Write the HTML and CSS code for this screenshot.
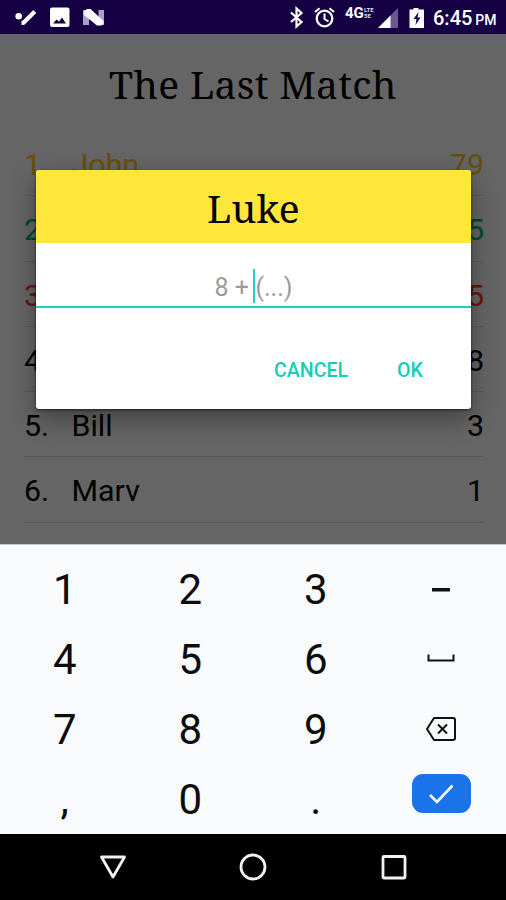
FILE: index.html
```
<!DOCTYPE html>
<html lang="en">
<head>
  <meta charset="UTF-8" />
  <meta name="viewport" content="width=device-width, initial-scale=1.0"/>
  <title>The Last Match</title>
  <link rel="stylesheet" href="styles.css">
</head>
<body>

  <div class="status-bar">
    <svg class="notifications" width="110" height="34" viewBox="0 0 110 34">
      <circle cx="18.700" cy="16.200" r="3.300" fill="#fff"/>
      <path d="M21.500 22.800h2L34.800 11.500" fill="none" stroke="#fff" stroke-width="4.200" stroke-linejoin="round"/>
      <rect x="50" y="7.500" width="19.500" height="19.500" rx="2" fill="#fff"/>
      <path d="M53 23.500l3.500-4 2.500 2 3-4 4 6z" fill="#160044"/>
      <path d="M83 10h6v15h-6zM98.500 10h5.500v15h-5.500z" fill="#a9a0c4"/>
      <path d="M83.500 12l3.500-3h3.500L103.500 21v3l-2.500 1.500h-4L84 15z" fill="#fff"/>
    </svg>
    <svg class="signals" width="144" height="34" viewBox="286 0 144 34">
      <path d="M291 12.500l10.500 9.500-5 4.500V8.500l5 4.500L291 22" fill="none" stroke="#fff" stroke-width="2.200"/>
      <circle cx="324.500" cy="18.500" r="7.800" fill="none" stroke="#fff" stroke-width="2.300"/>
      <path d="M324.500 13.500v5.500l4 2.500M315 12l4.500-3.800M334 12l-4.500-3.800" fill="none" stroke="#fff" stroke-width="2"/>
      <text x="345" y="18" class="net">4G</text>
      <text x="364" y="11.500" class="lte">LTE</text>
      <text x="364" y="18" class="lte">5E</text>
      <path d="M378 28l20-20v20z" fill="#6b5a92"/>
      <path d="M378 28l12.500-12.500V28z" fill="#fff"/>
      <path d="M409.500 9.500h4V8h5v1.500h5.500V28h-14.500z" fill="#fff"/>
      <path d="M418.500 12l-5 7h3l-1 6 5-7.500h-3z" fill="#160044"/>
    </svg>
    <div class="clock">6:45 <small>PM</small></div>
  </div>

  <div class="screen">
    <h1>The Last Match</h1>
    <ul class="scores">
      <li class="gold"><span class="rank">1.</span><span class="name">John</span><span>79</span></li>
      <li class="green"><span class="rank">2.</span><span class="name">Luke</span><span>15</span></li>
      <li class="red"><span class="rank">3.</span><span class="name">Anna</span><span>15</span></li>
      <li><span class="rank">4.</span><span class="name">Luke</span><span>8</span></li>
      <li><span class="rank">5.</span><span class="name">Bill</span><span>3</span></li>
      <li><span class="rank">6.</span><span class="name">Marv</span><span>1</span></li>
    </ul>

    <div class="overlay">
      <div class="dialog">
        <h2>Luke</h2>
        <div class="field"><span>8 +</span><i class="caret"></i><span>(...)</span></div>
        <div class="actions">
          <button>CANCEL</button>
          <button>OK</button>
        </div>
      </div>
    </div>
  </div>

  <div class="keyboard">
    <div>1</div><div>2</div><div>3</div>
    <div><svg width="20" height="4"><rect x="1" y="0" width="18" height="3.500" fill="#111"/></svg></div>
    <div>4</div><div>5</div><div>6</div>
    <div class="space"><svg width="28" height="8"><path d="M1.500 0.500V6.500H26.500V0.500" fill="none" stroke="#111" stroke-width="2"/></svg></div>
    <div>7</div><div>8</div><div>9</div>
    <div>
      <svg width="32" height="26" viewBox="0 0 32 26" fill="none" stroke="#111" stroke-width="2">
        <path d="M9 2H28Q30 2 30 4V22Q30 24 28 24H9L2 13z" stroke-linejoin="round"/>
        <path d="M13 8.500l9 9M22 8.500l-9 9"/>
      </svg>
    </div>
    <div>,</div><div>0</div><div>.</div>
    <div class="enter">
      <span><svg width="26" height="20"><path d="M2 11l7 7L24.500 1.500" fill="none" stroke="#fff" stroke-width="2.600"/></svg></span>
    </div>
  </div>

  <div class="nav-bar">
    <svg width="28" height="28"><path d="M2.500 4H25.500L14 24z" fill="none" stroke="#f2f2f2" stroke-width="2.800" stroke-linejoin="round"/></svg>
    <svg width="28" height="28"><circle cx="14" cy="14" r="12" fill="none" stroke="#f2f2f2" stroke-width="2.800"/></svg>
    <svg width="28" height="28"><rect x="3" y="3.500" width="22" height="21.500" rx="1" fill="none" stroke="#f2f2f2" stroke-width="2.800"/></svg>
  </div>

</body>
</html>
```
FILE: styles.css
```
body {
  margin: 0;
  width: 506px;
  height: 900px;
  overflow: hidden;
  display: flex;
  flex-direction: column;
  font-family: Roboto, sans-serif;
  color: #000;
}

.status-bar {
  height: 34px;
  background: #160044;
  color: #fff;
  display: flex;
  align-items: center;
}

.signals {
  margin-left: 176px;
}

.net {
  font-size: 15px;
  font-weight: bold;
  fill: #fff;
}

.lte {
  font-size: 6px;
  font-weight: bold;
  fill: #ddd;
}

.clock {
  margin: 2px 0 0 3px;
  font-size: 20px;
  font-weight: 500;
  white-space: nowrap;
}

.clock small {
  font-size: 14px;
  margin-left: -2px;
}

.screen {
  position: relative;
  height: 510px;
  background: #fcfcfc;
  overflow: hidden;
}

h1, h2 {
  margin: 0;
  font-family: "Noto Serif", "DejaVu Serif Condensed", "DejaVu Serif", serif;
  font-stretch: condensed;
  font-weight: normal;
  font-size: 39px;
  text-align: center;
}

h1 {
  height: 97px;
  line-height: 99px;
  letter-spacing: 0.3px;
}

.scores {
  list-style: none;
  margin: 0 22px 0 24px;
  padding: 0;
  font-size: 30.4px;
}

.scores li {
  display: flex;
  height: 65.3px;
  line-height: 67px;
  box-sizing: border-box;
  border-bottom: 1px solid #dcdcdc;
}

.rank {
  width: 47.5px;
}

.name {
  flex: 1;
}

.gold {
  color: #ffc51a;
}

.green {
  color: #00b180;
}

.red {
  color: #ff3a22;
}

.overlay {
  position: absolute;
  inset: 0;
  background: rgba(0, 0, 0, 0.6);
}

.dialog {
  width: 435px;
  height: 239px;
  margin: 136px 0 0 36px;
  background: #fff;
  border-radius: 3px;
  overflow: hidden;
  box-shadow: 0 10px 24px rgba(0, 0, 0, 0.35), 0 1px 3px rgba(0, 0, 0, 0.6);
}

h2 {
  height: 73px;
  line-height: 76px;
  background: #ffe63b;
  letter-spacing: 0.2px;
}

.field {
  height: 65px;
  box-sizing: border-box;
  padding-top: 24px;
  border-bottom: 2px solid #1fd1be;
  display: flex;
  justify-content: center;
  font-size: 25px;
  line-height: 42px;
  color: #9b9b9b;
}

.caret {
  width: 2.5px;
  height: 34px;
  margin: 2px 0 0 4px;
  background: #1fd1be;
}

.actions {
  display: flex;
  justify-content: flex-end;
  gap: 49px;
  padding: 50px 48px 0 0;
}

button {
  padding: 0;
  border: none;
  background: none;
  color: #14cdb8;
  font-family: inherit;
  font-size: 19.6px;
  font-weight: 500;
  line-height: 26px;
}

.keyboard {
  height: 289.5px;
  box-sizing: border-box;
  padding: 10px 2px 0;
  background: #f9fafc;
  border-top: 1px solid #c8c9ca;
  display: grid;
  grid-template-columns: repeat(4, 1fr);
  grid-template-rows: repeat(4, 69.8px);
  place-items: center;
  font-size: 42px;
  color: #0c0c0c;
}

.keyboard svg {
  display: block;
}

.space {
  margin-bottom: 3px;
}

.enter span {
  width: 59px;
  height: 39px;
  margin-bottom: 11px;
  border-radius: 11px;
  background: #1a73e8;
  display: flex;
  align-items: center;
  justify-content: center;
}

.nav-bar {
  flex: 1;
  background: #000;
  display: flex;
  align-items: center;
  justify-content: center;
  gap: 112.5px;
}
```
